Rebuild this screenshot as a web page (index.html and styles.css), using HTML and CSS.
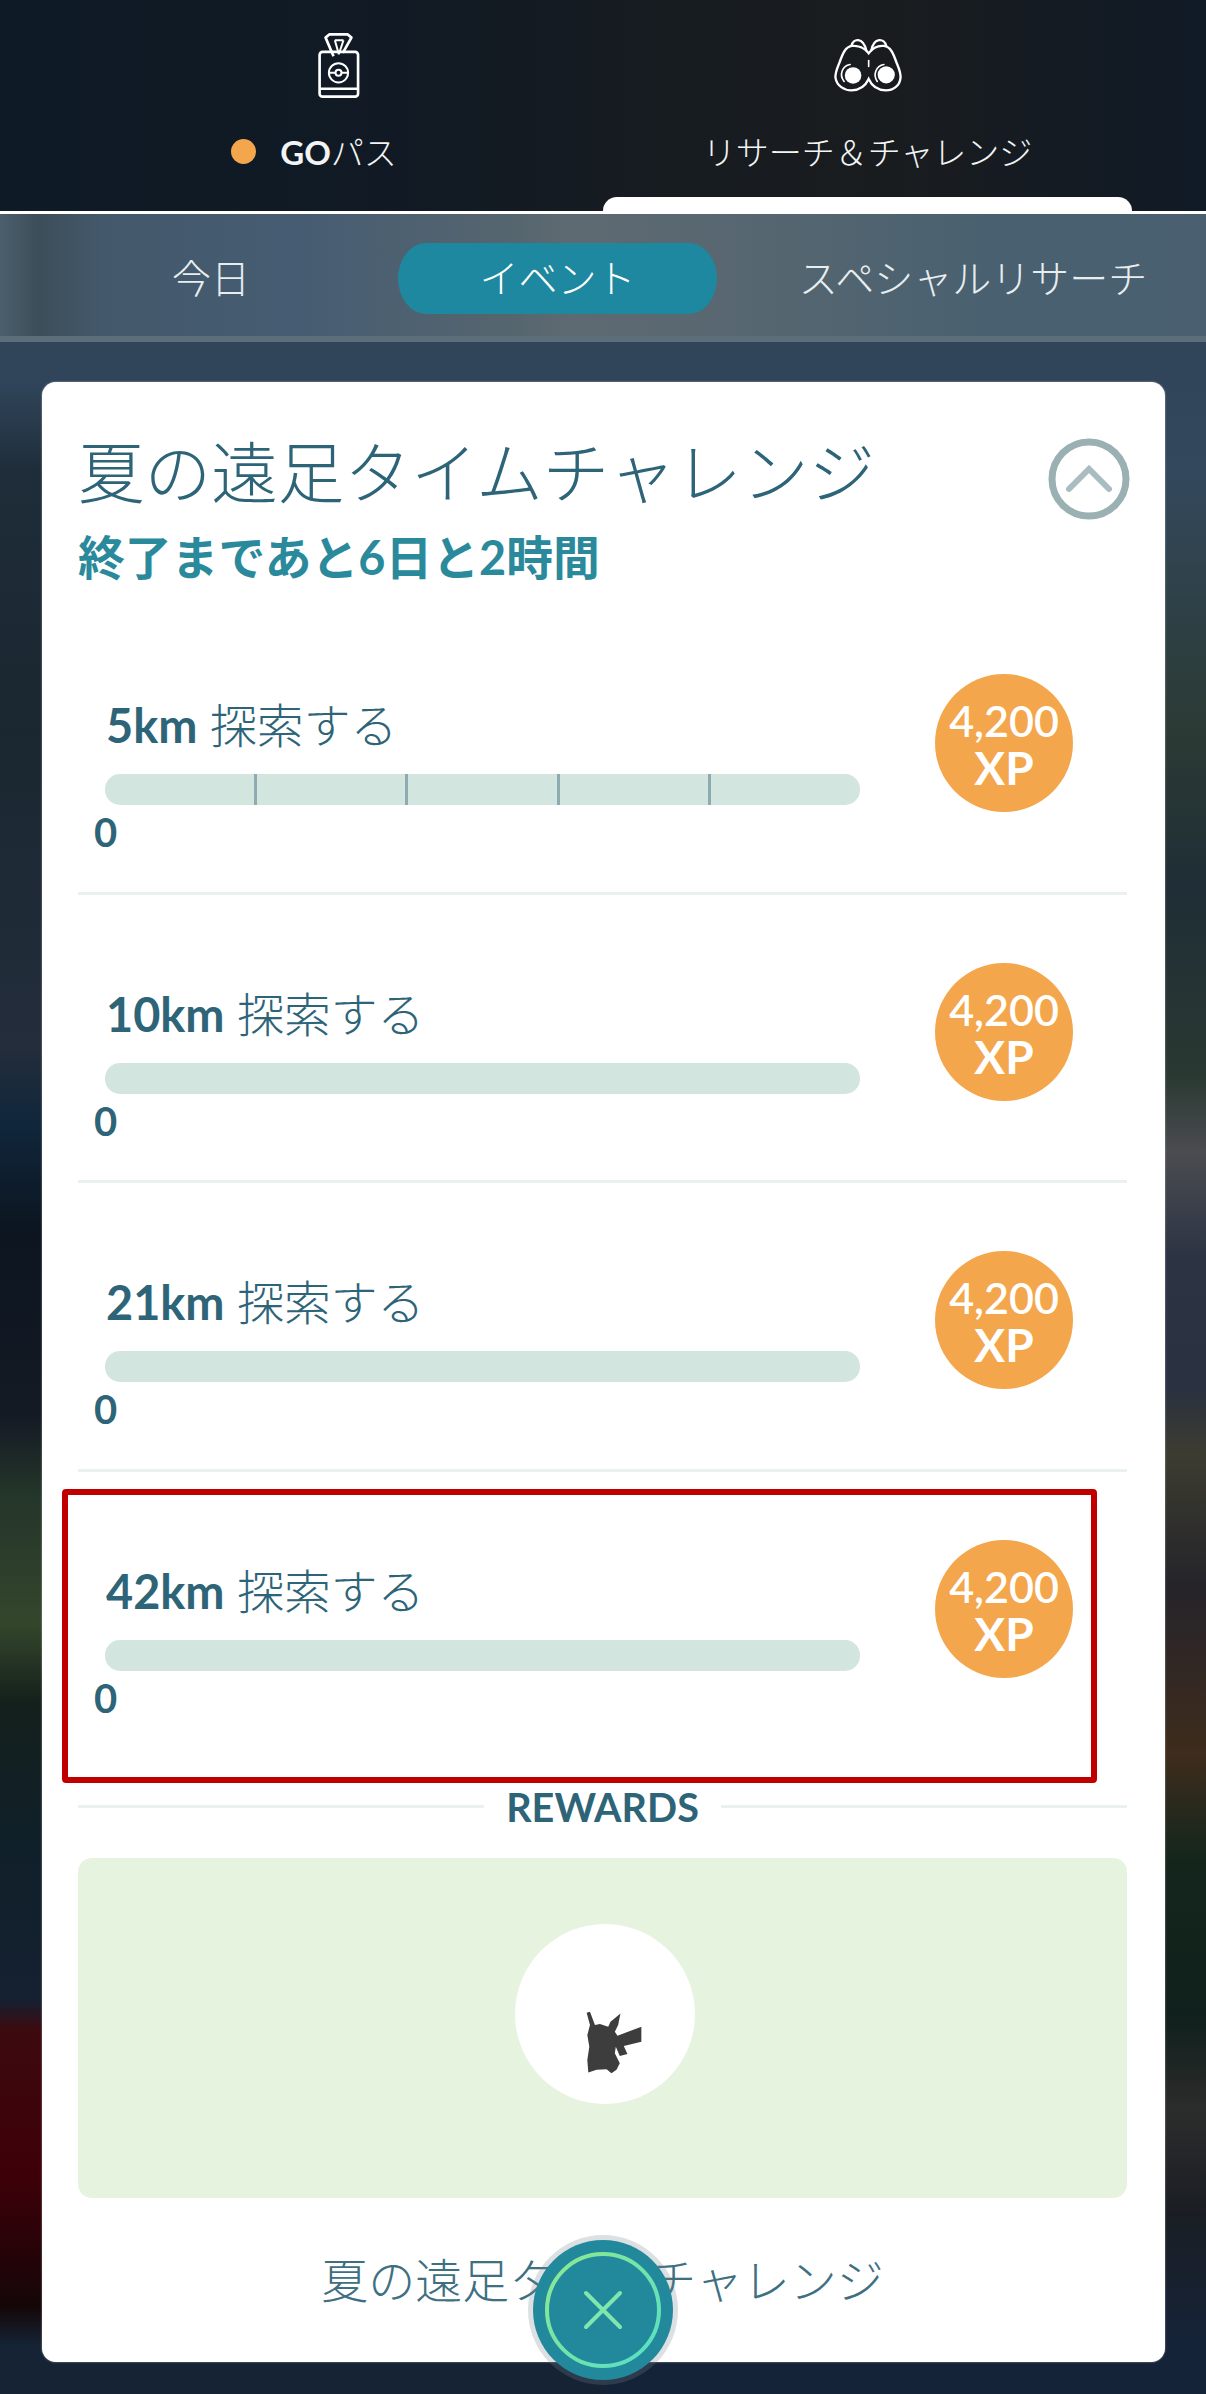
FILE: index.html
```html
<!DOCTYPE html>
<html lang="ja">
<head>
    <meta charset="UTF-8">
    <title>リサーチ＆チャレンジ</title>
    <link rel="stylesheet" href="styles.css">
</head>
<body>
    <header class="topbar">
        <div class="tab">
            <div class="tab-icon">
                <svg class="icon-pass" viewBox="225 35 140 205" fill="none" stroke="#fff" stroke-width="8" stroke-linejoin="round">
                    <rect x="238" y="95" width="116" height="135" rx="9"/>
                    <path d="M240 206H352"/>
                    <path d="M280 108L256 52L268 42H322L334 52L308 98"/>
                    <path d="M284 60H310M284 60L296 102M310 60L296 102" stroke-width="6"/>
                    <circle cx="295" cy="158" r="29" stroke-width="6"/>
                    <circle cx="295" cy="158" r="9" stroke-width="6"/>
                    <path d="M266 158H286M304 158H324" stroke-width="6"/>
                </svg>
            </div>
            <div class="tab-label"><span class="dot"></span><b>GO</b>パス</div>
        </div>
        <div class="tab active">
            <div class="tab-icon">
                <svg class="icon-binoculars" viewBox="95 48 210 172" fill="none" stroke="#fff" stroke-width="7" stroke-linecap="round">
                    <path d="M202 100C190 84 170 76 152 78C132 80 124 100 114 128C106 148 100 160 102 175C106 198 128 212 150 212C172 212 192 200 202 178C212 200 232 212 254 212C276 212 296 198 298 175C300 160 294 148 286 128C276 100 268 80 248 78C230 76 214 84 202 100Z"/>
                    <path d="M150 78C155 55 185 50 195 92M210 92C218 50 250 55 255 78"/>
                    <path d="M202 122V140" stroke-width="5"/>
                    <path d="M128 185C112 165 122 138 146 134" stroke-width="5"/>
                    <circle cx="155" cy="167" r="25" fill="#fff" stroke="none"/>
                    <path d="M228 185C214 165 224 138 248 134" stroke-width="5"/>
                    <circle cx="255" cy="165" r="26" fill="#fff" stroke="none"/>
                </svg>
            </div>
            <div class="tab-label">リサーチ＆チャレンジ</div>
        </div>
    </header>

    <nav class="subnav">
        <div class="subnav-item first">今日</div>
        <div class="subnav-item pill">イベント</div>
        <div class="subnav-item last">スペシャルリサーチ</div>
    </nav>

    <main class="scene">
        <section class="card">
            <div class="card-head">
                <div>
                    <h1 class="card-title">夏の遠足タイムチャレンジ</h1>
                    <p class="card-time">終了まであと6日と2時間</p>
                </div>
                <svg class="chevron" viewBox="0 0 82 82" fill="none" stroke="#9ab0b3" stroke-width="7">
                    <circle cx="41" cy="41" r="37"/>
                    <path d="M21 51L41 31L61 51" stroke-width="6" stroke-linecap="round" stroke="#a9bdc0"/>
                </svg>
            </div>

            <div class="task">
                <div class="task-main">
                    <div class="task-title"><b>5km</b> 探索する</div>
                    <div class="bar ticks"><span></span><span></span><span></span><span></span><span></span></div>
                    <div class="task-count">0</div>
                </div>
                <div class="xp">4,200<br><b>XP</b></div>
            </div>
            <div class="task">
                <div class="task-main">
                    <div class="task-title"><b>10km</b> 探索する</div>
                    <div class="bar"></div>
                    <div class="task-count">0</div>
                </div>
                <div class="xp">4,200<br><b>XP</b></div>
            </div>
            <div class="task">
                <div class="task-main">
                    <div class="task-title"><b>21km</b> 探索する</div>
                    <div class="bar"></div>
                    <div class="task-count">0</div>
                </div>
                <div class="xp">4,200<br><b>XP</b></div>
            </div>
            <div class="task task-last">
                <div class="task-main">
                    <div class="task-title"><b>42km</b> 探索する</div>
                    <div class="bar"></div>
                    <div class="task-count">0</div>
                </div>
                <div class="xp">4,200<br><b>XP</b></div>
                <div class="highlight"></div>
            </div>

            <div class="rewards-head"><span>REWARDS</span></div>
            <div class="rewards">
                <div class="reward-circle">
                    <svg class="silhouette" viewBox="315 330 175 195">
                        <path fill="#3d3d3d" d="M320 338L330 335L345 375L360 372L385 380L392 365L422 340L415 375L405 395L413 407L485 380L485 425L432 438L443 462L420 468L408 440L405 460L420 490L410 510L395 520L380 508L350 510L325 518L322 480L328 440L322 405L330 375Z"/>
                    </svg>
                </div>
            </div>
            <div class="card-foot">夏の遠足タイムチャレンジ</div>

            <button class="close-btn" type="button">
                <svg viewBox="0 0 140 140" fill="none">
                    <defs>
                        <linearGradient id="ring" x1="0" y1="0" x2="1" y2="1">
                            <stop offset="0" stop-color="#8fe98f"/>
                            <stop offset="1" stop-color="#55dfc6"/>
                        </linearGradient>
                    </defs>
                    <circle cx="70" cy="70" r="56" stroke="url(#ring)" stroke-width="4"/>
                    <path d="M53 53L87 87M87 53L53 87" stroke="#7fe6ad" stroke-width="4" stroke-linecap="round"/>
                </svg>
            </button>
        </section>
    </main>
</body>
</html>
```

FILE: styles.css
```css
* {
    box-sizing: border-box;
}
body {
    margin: 0;
    width: 1206px;
    height: 2394px;
    overflow: hidden;
    font-family: Lato, 'Noto Sans CJK JP', sans-serif;
    background-color: #152334;
}

/* top tabs */
.topbar {
    display: flex;
    height: 214px;
    padding: 0 74px;
    border-bottom: 3px solid #fff;
    background: linear-gradient(90deg, #0e1a26 0, #111a24 400px, #171c20 700px, #191c1f 900px, #101a26 1206px);
}
.tab {
    flex: 1;
    display: flex;
    flex-direction: column;
    align-items: center;
    padding-top: 32px;
    color: #f2f4f5;
}
.tab.active::after {
    content: "";
    width: 100%;
    height: 14px;
    margin-top: auto;
    background-color: #fff;
    border-radius: 14px 14px 0 0;
}
.tab-icon {
    height: 68px;
    display: flex;
    align-items: center;
}
.icon-pass {
    width: 47px;
    height: 68px;
}
.icon-binoculars {
    width: 70px;
    height: 57px;
    margin-top: -3px;
}
.tab-label {
    position: relative;
    margin-top: 32px;
    font-size: 33px;
    font-weight: 300;
    line-height: 40px;
}
.tab-label b {
    font-weight: 700;
}
.dot {
    position: absolute;
    left: -49px;
    top: 7px;
    width: 25px;
    height: 25px;
    border-radius: 50%;
    background-color: #f4a64c;
}

/* sub tabs */
.subnav {
    display: flex;
    align-items: center;
    height: 128px;
    padding: 7px 0 0 75px;
    border-bottom: 6px solid #5d6d79;
    background: linear-gradient(90deg, #4b5f6c 0, #3d4e5a 38px, #43586a 100px, #465c72 300px, #56666f 520px, #5e6a72 570px, #566670 760px, #486070 1000px, #4a6070 1206px);
}
.subnav-item {
    font-size: 39px;
    font-weight: 300;
    line-height: 71px;
    text-align: center;
    color: #e8edef;
}
.first {
    width: 272px;
}
.pill {
    width: 319px;
    margin-left: 51px;
    color: #fff;
    background-color: #1e88a0;
    border-radius: 28px / 50%;
}
.last {
    width: 386px;
    margin-left: 63px;
}

/* blurred map behind the card */
.scene {
    height: 2052px;
    padding: 40px 41px 0 42px;
    background:
        linear-gradient(#30455a 0, #30455a 40px, #1f2d3a 129px, #1a2730 391px, #232d3c 706px, #10263a 784px, #0c1520 889px, #141a24 1073px, #24352a 1151px, #34462c 1282px, #14201c 1361px, #10202a 1505px, #152030 1658px, #3c0a0f 1688px, #3e0008 1833px, #150608 1964px, #152334 2003px) left top / 50% 100% no-repeat,
        linear-gradient(#30455a 0, #30455a 40px, #33485c 129px, #2b3a34 391px, #1f2e36 548px, #2a3832 732px, #4a4c50 810px, #2c3444 915px, #2a3140 1046px, #3c3c30 1112px, #25242a 1243px, #3e2c1c 1413px, #14261c 1518px, #10201c 1676px, #2c2c2c 1768px, #1a1e24 1872px, #152338 2003px) right top / 50% 100% no-repeat;
}

/* card */
.card {
    position: relative;
    height: 1980px;
    padding: 50px 38px 0 36px;
    background-color: #fff;
    border-radius: 14px;
    box-shadow: 0 0 2px rgba(255, 255, 255, 0.6);
    color: #2d6478;
}
.card-head {
    display: flex;
    justify-content: space-between;
    align-items: flex-start;
    height: 174px;
}
.card-title {
    margin: 0;
    font-size: 66.6px;
    font-weight: 300;
    line-height: 80px;
}
.card-time {
    margin: 20px 0 0;
    font-size: 46.8px;
    font-weight: 700;
    line-height: 50px;
    color: #2a8a9c;
}
.chevron {
    width: 82px;
    height: 82px;
    margin: 6px -3px 0 0;
}

/* task rows */
.task {
    position: relative;
    display: flex;
    justify-content: space-between;
    align-items: flex-start;
    height: 288.5px;
    padding: 94px 54px 0 27px;
    border-bottom: 3px solid #e9f1f1;
}
.task-last {
    height: 315px;
    border-bottom: 0;
}
.task-main {
    width: 755px;
}
.task-title {
    padding-left: 1px;
    font-size: 46.8px;
    font-weight: 300;
    line-height: 50px;
}
.task-title b {
    font-weight: 700;
}
.bar {
    display: flex;
    height: 31px;
    margin-top: 24px;
    overflow: hidden;
    background-color: #d3e5df;
    border-radius: 15px;
}
.ticks span {
    flex: 1;
    border-right: 3px solid #8fabb2;
}
.ticks span:last-child {
    border-right: 0;
}
.task-count {
    margin: 9px 0 0 -11px;
    font-size: 40px;
    font-weight: 700;
    line-height: 36px;
}
.xp {
    width: 138px;
    height: 138px;
    margin-top: -26px;
    padding-top: 23px;
    border-radius: 50%;
    background-color: #f4a64c;
    color: #fff;
    font-size: 43px;
    font-weight: 600;
    line-height: 47px;
    text-align: center;
}
.xp b {
    font-size: 46px;
    font-weight: 700;
}
.highlight {
    position: absolute;
    left: -16px;
    top: 17px;
    width: 1035px;
    height: 294px;
    border: 6px solid #c00000;
    border-radius: 4px;
}

/* rewards */
.rewards-head {
    display: flex;
    align-items: center;
    gap: 22px;
    height: 40px;
    font-size: 39.6px;
    font-weight: 700;
}
.rewards-head::before,
.rewards-head::after {
    content: "";
    flex: 1;
    height: 3px;
    background-color: #e9f1f1;
}
.rewards {
    display: flex;
    justify-content: center;
    height: 340px;
    margin-top: 31px;
    padding-top: 66px;
    background-color: #e6f3df;
    border-radius: 14px;
}
.reward-circle {
    width: 180px;
    height: 180px;
    margin-left: 5px;
    padding: 86px 0 0 70px;
    border-radius: 50%;
    background-color: #fff;
}
.silhouette {
    display: block;
    width: 58px;
    height: 65px;
}
.card-foot {
    margin-top: 52px;
    font-size: 47px;
    font-weight: 300;
    line-height: 60px;
    text-align: center;
    color: #3e7082;
}
.close-btn {
    position: absolute;
    left: 491px;
    bottom: -18px;
    width: 140px;
    height: 140px;
    padding: 0;
    border: 0;
    border-radius: 50%;
    background-color: #22899c;
    box-shadow: 0 0 0 5px rgba(120, 130, 140, 0.25);
}
.close-btn svg {
    display: block;
}
```
